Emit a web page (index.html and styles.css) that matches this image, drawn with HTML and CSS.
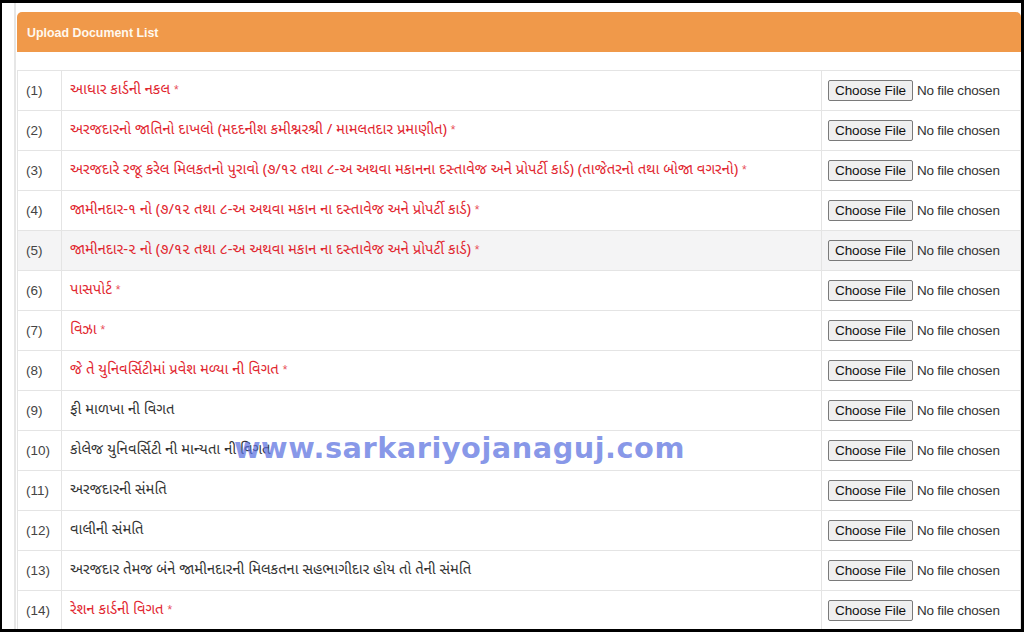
FILE: index.html
```html
<!DOCTYPE html>
<html lang="gu">
<head>
<meta charset="utf-8">
<title>Upload Document List</title>
<link rel="stylesheet" href="styles.css">
</head>
<body>
<div class="frame">
  <div class="panel">
    <div class="panel-head">Upload Document List</div>
    <table class="docs">
      <colgroup><col class="c-num"><col class="c-name"><col class="c-file"></colgroup>
      <tbody>
        <tr><td class="num">(1)</td><td class="name req">આધાર કાર્ડની નકલ <span class="ast">*</span></td><td class="file"><span class="btn">Choose File</span><span class="nf">No file chosen</span></td></tr>
        <tr><td class="num">(2)</td><td class="name req">અરજદારનો જાતિનો દાખલો (મદદનીશ કમીશ્નરશ્રી / મામલતદાર પ્રમાણીત) <span class="ast">*</span></td><td class="file"><span class="btn">Choose File</span><span class="nf">No file chosen</span></td></tr>
        <tr><td class="num">(3)</td><td class="name req">અરજદારે રજૂ કરેલ મિલકતનો પુરાવો (૭/૧૨ તથા ૮-અ અથવા મકાનના દસ્તાવેજ અને પ્રોપર્ટી કાર્ડ) (તાજેતરનો તથા બોજા વગરનો) <span class="ast">*</span></td><td class="file"><span class="btn">Choose File</span><span class="nf">No file chosen</span></td></tr>
        <tr><td class="num">(4)</td><td class="name req">જામીનદાર-૧ નો (૭/૧૨ તથા ૮-અ અથવા મકાન ના દસ્તાવેજ અને પ્રોપર્ટી કાર્ડ) <span class="ast">*</span></td><td class="file"><span class="btn">Choose File</span><span class="nf">No file chosen</span></td></tr>
        <tr class="hover"><td class="num">(5)</td><td class="name req">જામીનદાર-૨ નો (૭/૧૨ તથા ૮-અ અથવા મકાન ના દસ્તાવેજ અને પ્રોપર્ટી કાર્ડ) <span class="ast">*</span></td><td class="file"><span class="btn">Choose File</span><span class="nf">No file chosen</span></td></tr>
        <tr><td class="num">(6)</td><td class="name req">પાસપોર્ટ <span class="ast">*</span></td><td class="file"><span class="btn">Choose File</span><span class="nf">No file chosen</span></td></tr>
        <tr><td class="num">(7)</td><td class="name req">વિઝા <span class="ast">*</span></td><td class="file"><span class="btn">Choose File</span><span class="nf">No file chosen</span></td></tr>
        <tr><td class="num">(8)</td><td class="name req">જે તે યુનિવર્સિટીમાં પ્રવેશ મળ્યા ની વિગત <span class="ast">*</span></td><td class="file"><span class="btn">Choose File</span><span class="nf">No file chosen</span></td></tr>
        <tr><td class="num">(9)</td><td class="name">ફી માળખા ની વિગત</td><td class="file"><span class="btn">Choose File</span><span class="nf">No file chosen</span></td></tr>
        <tr><td class="num">(10)</td><td class="name">કોલેજ યુનિવર્સિટી ની માન્યતા ની વિગત</td><td class="file"><span class="btn">Choose File</span><span class="nf">No file chosen</span></td></tr>
        <tr><td class="num">(11)</td><td class="name">અરજદારની સંમતિ</td><td class="file"><span class="btn">Choose File</span><span class="nf">No file chosen</span></td></tr>
        <tr><td class="num">(12)</td><td class="name">વાલીની સંમતિ</td><td class="file"><span class="btn">Choose File</span><span class="nf">No file chosen</span></td></tr>
        <tr><td class="num">(13)</td><td class="name">અરજદાર તેમજ બંને જામીનદારની મિલકતના સહભાગીદાર હોય તો તેની સંમતિ</td><td class="file"><span class="btn">Choose File</span><span class="nf">No file chosen</span></td></tr>
        <tr><td class="num">(14)</td><td class="name req">રેશન કાર્ડની વિગત <span class="ast">*</span></td><td class="file"><span class="btn">Choose File</span><span class="nf">No file chosen</span></td></tr>
      </tbody>
    </table>
  </div>
  <div class="watermark">www.sarkariyojanaguj.com</div>
</div>
</body>
</html>
```

FILE: styles.css
```css
* { box-sizing: border-box; }
html, body { margin: 0; padding: 0; background: #000; }
body { font-family: "Liberation Sans", Arial, sans-serif; }

.frame {
  position: relative;
  width: 1024px;
  height: 632px;
  overflow: hidden;
  background: #fff;
  border-style: solid;
  border-color: #000;
  border-width: 3px 3px 3px 2px;
}

.panel {
  margin-left: 12px;
  height: 100%;
  border-left: 2px solid #e6e6e6;
  padding-left: 1px;
  padding-top: 9px;
}

.panel-head {
  height: 40px;
  background: #f0994a;
  border-radius: 5px 5px 0 0;
  color: #fff8ee;
  font-weight: bold;
  font-size: 12.4px;
  display: flex;
  align-items: center;
  padding-left: 10px;
  padding-top: 2px;
  margin-bottom: 18px;
}

.docs {
  width: 100%;
  border-collapse: collapse;
  table-layout: fixed;
}
.c-num { width: 44px; }
.c-name { width: 760px; }

.docs td {
  height: 40px;
  border: 1px solid #e4e4e4;
  padding: 0 8px;
  vertical-align: middle;
  white-space: nowrap;
}
.docs tr.hover td { background: #f4f4f5; }

.num {
  font-size: 13.5px;
  color: #444;
}
.name {
  font-family: "Noto Sans Gujarati", "Lohit Gujarati", "Noto Sans", sans-serif;
  font-size: 14.8px;
  color: #333;
}
.name.req { color: #e1262f; }
.ast {
  font-family: "Liberation Sans", Arial, sans-serif;
  font-size: 12px;
  color: #e8505a;
}

.file {
  padding-left: 6px !important;
  font-size: 13.5px;
}
.btn {
  display: inline-block;
  height: 21px;
  line-height: 19px;
  padding: 0 6px;
  border: 1px solid #7a7a7a;
  border-radius: 2px;
  background: #efefef;
  color: #111;
  font-size: 13.5px;
  letter-spacing: -0.1px;
  vertical-align: middle;
}
.nf {
  margin-left: 4px;
  color: #333;
  letter-spacing: -0.2px;
  vertical-align: middle;
}

.watermark {
  position: absolute;
  left: 232px;
  top: 428px;
  font-family: "DejaVu Sans", Verdana, sans-serif;
  font-weight: bold;
  font-size: 28.8px;
  letter-spacing: 0.5px;
  color: rgba(90, 112, 224, 0.72);
}
```
